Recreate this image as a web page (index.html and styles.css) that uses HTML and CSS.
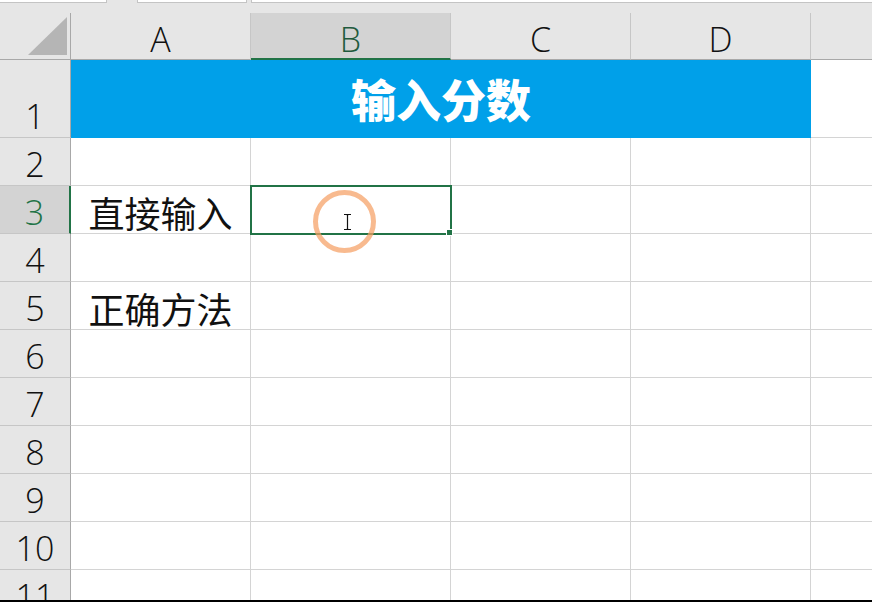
FILE: index.html
```html
<!DOCTYPE html>
<html lang="zh-CN">
<head>
<meta charset="utf-8">
<title>输入分数</title>
<link rel="stylesheet" href="styles.css">
</head>
<body>
<div class="screen">
  <div class="topstrip">
    <div class="tbox tbox-a"></div>
    <div class="tbox tbox-b"></div>
    <div class="tbox tbox-c"></div>
  </div>
  <div class="sheet">
    <div class="corner"><svg width="70" height="46" viewBox="0 0 70 46"><polygon points="28,42 67,42 67,4" fill="#b5b5b5"/></svg></div>
    <div class="colh">A</div>
    <div class="colh colh-sel">B</div>
    <div class="colh">C</div>
    <div class="colh">D</div>
    <div class="colh colh-e"></div>

    <div class="rowh rowh-1">1</div>
    <div class="title">输入分数</div>
    <div class="cell cell-e"></div>

    <div class="rowh">2</div>
    <div class="cell"></div><div class="cell"></div><div class="cell"></div><div class="cell"></div><div class="cell cell-e"></div>

    <div class="rowh rowh-sel">3</div>
    <div class="cell txt">直接输入</div>
    <div class="cell active"><span class="handle"></span></div>
    <div class="cell"></div><div class="cell"></div><div class="cell cell-e"></div>

    <div class="rowh">4</div>
    <div class="cell"></div><div class="cell"></div><div class="cell"></div><div class="cell"></div><div class="cell cell-e"></div>

    <div class="rowh">5</div>
    <div class="cell txt">正确方法</div>
    <div class="cell"></div><div class="cell"></div><div class="cell"></div><div class="cell cell-e"></div>

    <div class="rowh">6</div>
    <div class="cell"></div><div class="cell"></div><div class="cell"></div><div class="cell"></div><div class="cell cell-e"></div>

    <div class="rowh">7</div>
    <div class="cell"></div><div class="cell"></div><div class="cell"></div><div class="cell"></div><div class="cell cell-e"></div>

    <div class="rowh">8</div>
    <div class="cell"></div><div class="cell"></div><div class="cell"></div><div class="cell"></div><div class="cell cell-e"></div>

    <div class="rowh">9</div>
    <div class="cell"></div><div class="cell"></div><div class="cell"></div><div class="cell"></div><div class="cell cell-e"></div>

    <div class="rowh">10</div>
    <div class="cell"></div><div class="cell"></div><div class="cell"></div><div class="cell"></div><div class="cell cell-e"></div>

    <div class="rowh">11</div>
    <div class="cell"></div><div class="cell"></div><div class="cell"></div><div class="cell"></div><div class="cell cell-e"></div>
  </div>
  <div class="cursor-ring"></div>
  <svg class="ibeam" width="9" height="16" viewBox="0 0 9 16"><path d="M1 0.5H3.5Q4.5 0.5 4.5 1.5V14.5Q4.5 15.5 3.5 15.5H1M8 0.5H5.5Q4.5 0.5 4.5 1.5M4.5 14.5Q4.5 15.5 5.5 15.5H8" fill="none" stroke="#111" stroke-width="1.2"/></svg>
</div>
</body>
</html>
```

FILE: styles.css
```css
html, body {
  margin: 0;
  padding: 0;
  background: #fff;
}
.screen {
  position: relative;
  width: 872px;
  height: 600px;
  overflow: hidden;
  border-bottom: 2px solid #000;
  background: #e6e6e6;
  font-family: "Open Sans", "Noto Sans", "Noto Sans CJK SC", sans-serif;
}
.topstrip {
  height: 13px;
  display: flex;
  align-items: flex-start;
}
.tbox {
  height: 2px;
  background: #fff;
  border: 1px solid #c4c4c4;
  border-top: none;
}
.tbox-a { width: 106px; border-left: none; }
.tbox-b { width: 108px; margin-left: 30px; }
.tbox-c { flex: 1; margin-left: 4px; border-right: none; }

.sheet {
  display: grid;
  grid-template-columns: 71px 180px 200px 180px 180px 1fr;
  grid-template-rows: 47px 78px repeat(11, 48px);
  background: #fff;
}
.corner {
  background: #e6e6e6;
  border-right: 1px solid #a8a8a8;
  border-bottom: 1px solid #a8a8a8;
}
.corner svg { display: block; }
.colh {
  background: #e6e6e6;
  border-right: 1px solid #c6c6c6;
  border-bottom: 1px solid #a8a8a8;
  display: flex;
  align-items: flex-end;
  justify-content: center;
  font-size: 34px;
  font-weight: 300;
  line-height: 1;
  color: #111;
  padding-bottom: 3px;
  box-sizing: border-box;
}
.colh-e { border-right: none; }
.colh-sel {
  background: #d3d3d3;
  color: #1f5a3d;
  border-bottom: 2px solid #217346;
  padding-bottom: 2px;
}
.rowh {
  background: #e6e6e6;
  border-right: 1px solid #a8a8a8;
  border-bottom: 1px solid #c6c6c6;
  display: flex;
  align-items: flex-end;
  justify-content: center;
  font-size: 34px;
  font-weight: 300;
  line-height: 1;
  color: #111;
  padding-bottom: 4px;
  box-sizing: border-box;
}
.rowh-sel {
  background: #d3d3d3;
  color: #217346;
  border-right: 2px solid #217346;
}
.title {
  grid-column: 2 / 6;
  background: #00a0e9;
  color: #fff;
  font-family: "Noto Sans CJK SC", sans-serif;
  font-weight: 900;
  font-size: 45px;
  line-height: 1;
  display: flex;
  align-items: center;
  justify-content: center;
  padding-bottom: 2px;
  box-sizing: border-box;
}
.cell {
  border-right: 1px solid #d4d4d4;
  border-bottom: 1px solid #d4d4d4;
  box-sizing: border-box;
}
.cell-e { border-right: none; }
.txt {
  display: flex;
  align-items: flex-end;
  justify-content: center;
  font-family: "Noto Sans CJK SC", sans-serif;
  font-size: 36px;
  line-height: 1;
  color: #111;
  padding-bottom: 3px;
}
.active {
  position: relative;
  outline: 2px solid #217346;
  outline-offset: -1px;
  z-index: 1;
}
.handle {
  position: absolute;
  right: -3px;
  bottom: -3px;
  width: 5px;
  height: 5px;
  background: #217346;
  border: 1px solid #fff;
}
.cursor-ring {
  position: absolute;
  left: 313px;
  top: 190px;
  width: 53px;
  height: 53px;
  border: 5px solid rgba(245, 160, 100, 0.72);
  border-radius: 50%;
  z-index: 2;
}
.ibeam {
  position: absolute;
  left: 343px;
  top: 214px;
  z-index: 3;
}
```
